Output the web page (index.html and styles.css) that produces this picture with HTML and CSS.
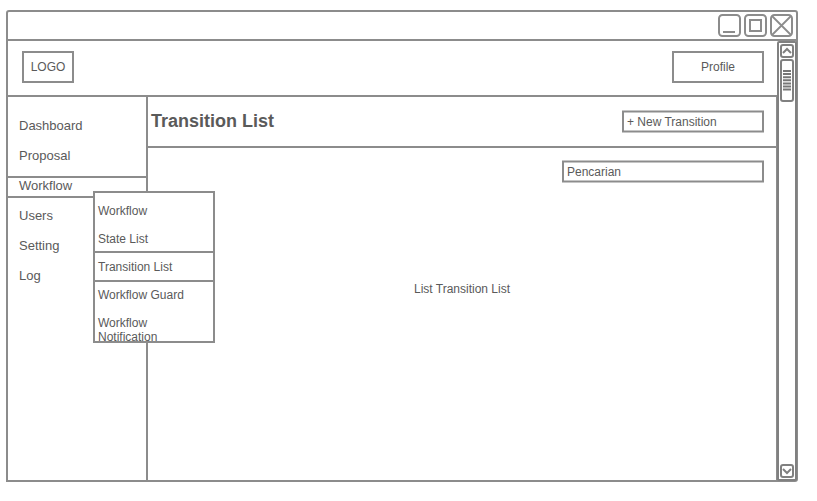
FILE: index.html
```html
<!DOCTYPE html>
<html lang="en">
<head>
<meta charset="utf-8">
<title>Transition List</title>
<link rel="stylesheet" href="styles.css">
</head>
<body>
<div class="window">
  <div class="titlebar">
    <svg class="controls" width="76" height="25" viewBox="0 0 76 25">
      <rect x="2" y="2" width="21" height="21" rx="3.5"/>
      <path d="M6 19H18"/>
      <rect x="28" y="2" width="21" height="21" rx="3.5"/>
      <rect x="33" y="7" width="11" height="11"/>
      <rect x="54" y="2" width="21" height="21" rx="3.5"/>
      <path class="thin" d="M55 3L74 22M74 3L55 22"/>
    </svg>
  </div>
  <div class="body">
    <div class="page">
      <header class="header">
        <div class="logo">LOGO</div>
        <div class="profile">Profile</div>
      </header>
      <div class="content">
        <nav class="sidebar">
          <a class="item">Dashboard</a>
          <a class="item">Proposal</a>
          <a class="item active">Workflow</a>
          <a class="item">Users</a>
          <a class="item">Setting</a>
          <a class="item">Log</a>
          <div class="submenu">
            <a class="entry">Workflow</a>
            <a class="entry">State List</a>
            <a class="entry current">Transition List</a>
            <a class="entry">Workflow Guard</a>
            <a class="entry">Workflow Notification</a>
          </div>
        </nav>
        <main class="main">
          <div class="heading">
            <h1>Transition List</h1>
            <div class="field create"><svg width="142" height="23"><rect x="1" y="1.5" width="140" height="20"/></svg><span>+ New Transition</span></div>
          </div>
          <div class="field search"><svg width="202" height="23"><rect x="1" y="1.5" width="200" height="20"/></svg><span>Pencarian</span></div>
          <p class="placeholder">List Transition List</p>
        </main>
      </div>
    </div>
    <div class="scrollbar">
      <svg width="14" height="14"><rect x="1" y="1" width="12" height="12" rx="2"/><path d="M3 9L7 5L11 9"/></svg>
      <svg class="thumb" width="14" height="43"><rect x="1" y="1" width="12" height="41" rx="2"/><path class="grip" d="M3 12H11M3 15.1H11M3 18.2H11M3 21.3H11M3 24.4H11M3 27.5H11M3 30.6H11"/></svg>
      <svg class="down" width="14" height="14"><rect x="1" y="1" width="12" height="12" rx="2"/><path d="M3 5L7 9L11 5"/></svg>
    </div>
  </div>
</div>
</body>
</html>
```
FILE: styles.css
```css
* { box-sizing: border-box; }
body {
  margin: 0;
  padding: 10px 0 0 6px;
  background: #fff;
  color: #5a5a5a;
  font: 12px/14px "Liberation Sans", Arial, sans-serif;
}
svg { display: block; fill: none; stroke: #8c8c8c; stroke-width: 2; }
.window {
  width: 792px;
  height: 472px;
  border: 2px solid #8c8c8c;
  border-radius: 3px 3px 3px 0;
}
.titlebar {
  display: flex;
  justify-content: flex-end;
  height: 29px;
  padding: 1px 3px 0 0;
  border-bottom: 2px solid #8c8c8c;
}
.thin { stroke-width: 1.8; }
.body { display: flex; height: 439px; }
.page { width: 769px; }
.header {
  display: flex;
  justify-content: space-between;
  height: 56px;
  padding: 10px 13px 0 14px;
  border-bottom: 2px solid #8c8c8c;
}
.logo, .profile {
  height: 32px;
  border: 2px solid #8c8c8c;
  line-height: 29px;
  text-align: center;
}
.logo { width: 52px; }
.profile { width: 92px; }
.content {
  display: flex;
  width: 770px;
  height: 383px;
  border-right: 2px solid #8c8c8c;
}
.sidebar {
  position: relative;
  width: 140px;
  padding-top: 19px;
  border-right: 2px solid #8c8c8c;
  font-size: 13px;
}
.item {
  display: block;
  height: 22px;
  margin-bottom: 8px;
  padding-left: 11px;
  line-height: 20px;
}
.active {
  border: solid #8c8c8c;
  border-width: 2px 0;
  line-height: 16px;
}
.submenu {
  position: absolute;
  left: 85px;
  top: 94px;
  width: 122px;
  height: 152px;
  padding-top: 11px;
  overflow: hidden;
  border: 2px solid #8c8c8c;
  background: #fff;
  font-size: 12px;
}
.entry { display: block; padding: 0 20px 0 3px; margin-bottom: 14px; }
.current {
  margin: -9px 0 6px;
  padding-top: 7px;
  height: 31px;
  border: solid #8c8c8c;
  border-width: 2px 0;
}
.main { flex: 1; }
.heading {
  display: flex;
  justify-content: space-between;
  height: 51px;
  padding: 13px 12px 0 3px;
  border-bottom: 2px solid #8c8c8c;
}
h1 { margin: 0; font-size: 18px; line-height: 22px; }
.field { position: relative; height: 23px; padding: 5px 5px 0; }
.field svg { position: absolute; left: 0; top: 0; }
.create { width: 142px; }
.search { width: 202px; margin: 12px 12px 0 auto; }
.placeholder { margin: 99px 0 0; text-align: center; }
.scrollbar {
  display: flex;
  flex-direction: column;
  width: 20px;
  height: 440px;
  margin-right: -1px;
  padding: 1px;
  border: 2px solid #808080;
  border-radius: 2px;
}
.scrollbar svg { stroke: #808080; }
.thumb { margin-top: 1px; }
.down { margin-top: auto; }
.scrollbar .grip { stroke: #777; stroke-width: 2; }
```
